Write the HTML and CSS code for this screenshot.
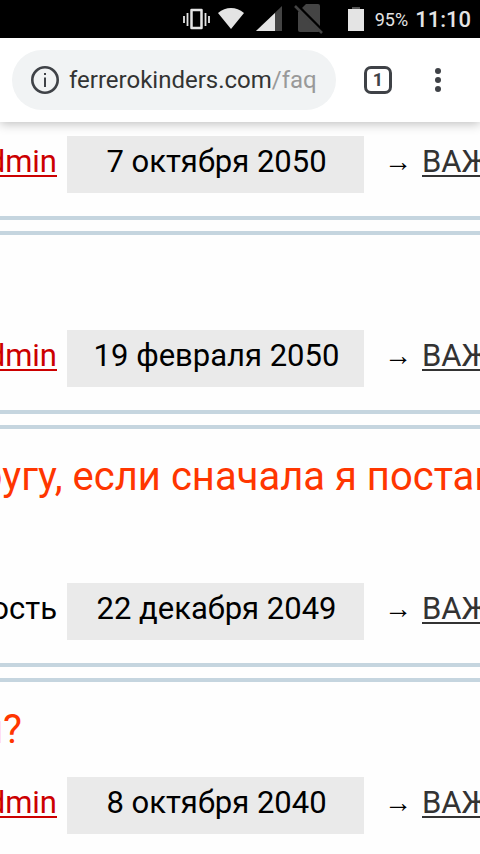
FILE: index.html
```html
<!DOCTYPE html>
<html lang="ru">

<head>
    <meta charset="UTF-8">
    <meta name="viewport" content="width=device-width, initial-scale=1.0">
    <title>FAQ</title>
    <link rel="stylesheet" href="styles.css">
</head>

<body>
    <div class="status">
        <svg class="vibrate" width="27" height="22" viewBox="0 0 27 22">
            <path d="M8.500 2h10v18h-10z" fill="none" stroke="#e4e4e4" stroke-width="2.500" stroke-linejoin="round" />
            <path d="M1 8v7M4.500 5v13M22.500 5v13M26 8v7" fill="none" stroke="#e4e4e4" stroke-width="1.800" />
        </svg>
        <svg class="wifi" width="26" height="22" viewBox="0 0 26 22">
            <path d="M0 5Q6 0 13 0T26 5L13 21z" fill="#e4e4e4" />
        </svg>
        <svg class="signal" width="26" height="26" viewBox="0 0 26 26">
            <path d="M26 0v25H0z" fill="#444" />
            <path d="M19 7v18H0z" fill="#e4e4e4" />
        </svg>
        <svg class="nosim" width="30" height="30" viewBox="0 0 30 30">
            <path d="M12 0h12q2 0 2 2v24q0 2-2 2H6q-2 0-2-2V8z" fill="#444" />
            <path d="M2 0l28 28" stroke="#000" stroke-width="3" />
            <path d="M1 2l27 27" stroke="#444" stroke-width="2.500" />
        </svg>
        <svg class="battery" width="16" height="24" viewBox="0 0 16 24">
            <path d="M4 0h8v2h4H0h4z" fill="#555" />
            <path d="M0 2h16v22H0z" fill="#e4e4e4" />
        </svg>
        <span class="percent">95%</span>
        <span class="time">11:10</span>
    </div>

    <header class="toolbar">
        <div class="address">
            <button class="info" type="button" aria-label="Info">
                <svg width="28" height="28" viewBox="0 0 28 28">
                    <circle cx="14" cy="14" r="12.700" fill="none" stroke="#3f4247" stroke-width="2.600" />
                    <path d="M13 7h2v2h-2zM13 11.500h2V21h-2z" fill="#3f4247" />
                </svg>
            </button>
            <a class="url" href="#">ferrerokinders.com<span class="path">/faq</span></a>
        </div>
        <button class="tabs" type="button">1</button>
        <button class="menu" type="button" aria-label="Menu">
            <svg width="6" height="24" viewBox="0 0 6 24">
                <g fill="#3f4247">
                    <circle cx="3" cy="3" r="3" />
                    <circle cx="3" cy="12" r="3" />
                    <circle cx="3" cy="21" r="3" />
                </g>
            </svg>
        </button>
    </header>

    <main class="list">
        <article class="post first">
            <div class="meta">
                <div class="author"><a href="#">admin</a></div>
                <time class="date" datetime="2050-10-07">7 октября 2050</time>
                <span class="arrow">→</span>
                <a class="category" href="#">ВАЖНО</a>
            </div>
        </article>

        <article class="post">
            <h2 class="title"></h2>
            <div class="meta">
                <div class="author"><a href="#">admin</a></div>
                <time class="date" datetime="2050-02-19">19 февраля 2050</time>
                <span class="arrow">→</span>
                <a class="category" href="#">ВАЖНО</a>
            </div>
        </article>

        <article class="post">
            <h2 class="title long">ругу, если сначала я поставлю</h2>
            <div class="meta">
                <div class="author">Гость</div>
                <time class="date" datetime="2049-12-22">22 декабря 2049</time>
                <span class="arrow">→</span>
                <a class="category" href="#">ВАЖНО</a>
            </div>
        </article>

        <article class="post">
            <h2 class="title">и?</h2>
            <div class="meta">
                <div class="author"><a href="#">admin</a></div>
                <time class="date" datetime="2040-10-08">8 октября 2040</time>
                <span class="arrow">→</span>
                <a class="category" href="#">ВАЖНО</a>
            </div>
        </article>
    </main>
</body>

</html>
```

FILE: styles.css
```css
/* reset */
* {
    box-sizing: border-box;
}

body,
h2,
button {
    margin: 0;
    padding: 0;
}

button {
    border: 0;
    background: none;
    color: inherit;
    font-family: inherit;
}

svg {
    display: block;
}

body {
    height: 100vh;
    overflow: hidden;
    background-color: #fefefe;
    font-family: Roboto, "Liberation Sans", sans-serif;
    color: #000;
}

/* status bar */
.status {
    display: flex;
    align-items: center;
    justify-content: flex-end;
    height: 38px;
    padding-right: 9px;
    background-color: #000;
    color: #e4e4e4;
}

.wifi {
    margin-left: 8px;
}

.signal {
    margin-left: 12px;
}

.nosim {
    margin-left: 12px;
}

.battery {
    margin-left: 24px;
}

.percent {
    margin-left: 11px;
    font-size: 18px;
}

.time {
    margin-left: 7px;
    font-size: 22px;
    font-weight: 500;
}

/* toolbar */
.toolbar {
    position: relative;
    display: flex;
    align-items: center;
    height: 84px;
    padding: 0 39px 0 12px;
    background-color: #fff;
    box-shadow: 0 2px 10px rgba(0, 0, 0, 0.25);
    clip-path: inset(0 0 -14px 0);
    color: #3f4247;
}

.address {
    display: flex;
    flex: 1;
    align-items: center;
    height: 60px;
    padding-left: 19px;
    border-radius: 30px;
    background-color: #f1f3f4;
}

.url {
    margin-left: 10px;
    color: #333;
    font-size: 24px;
    text-decoration: none;
    white-space: nowrap;
}

.path {
    color: #999;
}

.tabs {
    width: 28px;
    height: 28px;
    margin-left: 28px;
    border: 3px solid #3f4247;
    border-radius: 7px;
    font-size: 18px;
    font-weight: 700;
    line-height: 22px;
}

.menu {
    margin-left: 43px;
}

/* posts */
.list {
    display: flex;
    flex-direction: column;
    gap: 11px;
}

.post {
    overflow: hidden;
    padding-bottom: 23px;
    border: solid #c5d5df;
    border-width: 4px 0;
}

.first {
    padding-top: 14px;
    border-top: 0;
}

.title {
    height: 95px;
    margin-left: -20px;
    color: #ff3600;
    font-size: 40px;
    font-weight: 400;
    line-height: 95px;
    white-space: nowrap;
}

.long {
    margin-bottom: 59px;
}

.meta {
    display: flex;
    font-size: 31px;
    line-height: 51px;
    white-space: nowrap;
}

.author {
    display: flex;
    flex: none;
    justify-content: flex-end;
    width: 57px;
    margin-right: 10px;
}

.author a {
    color: #c00;
}

.date {
    flex: none;
    width: 297px;
    height: 57px;
    padding-left: 2px;
    background-color: #eaeaea;
    text-align: center;
}

.arrow {
    flex: none;
    width: 58px;
    padding-left: 10px;
    font-size: 28px;
    text-align: center;
}

.meta a {
    text-decoration-thickness: 2px;
    text-underline-offset: 3px;
}

.category {
    color: #333;
}
```
